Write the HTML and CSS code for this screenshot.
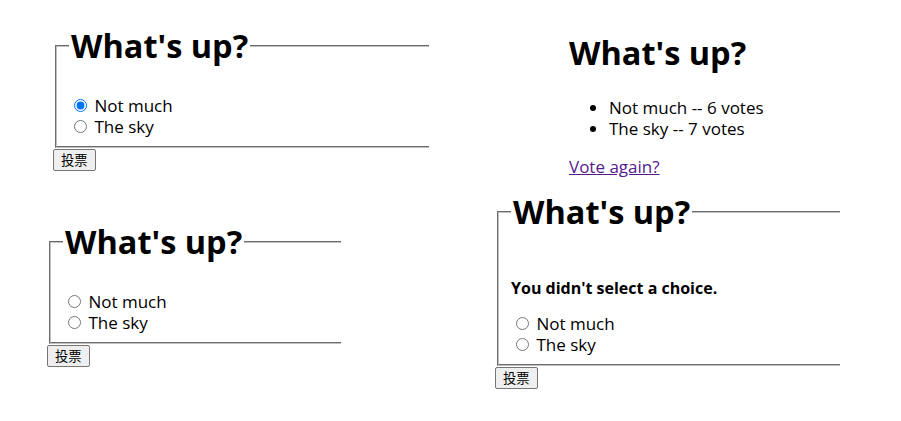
FILE: index.html
```html
<!DOCTYPE html>
<html lang="zh">
<head>
<meta charset="utf-8">
<title>Polls</title>
<link rel="stylesheet" href="styles.css">
</head>
<body>
<div class="collage">
  <div class="col col-left">
    <div class="shot shot-a">
      <form class="poll">
        <fieldset class="poll-set">
          <legend class="poll-legend"><h1 class="q">What's up?</h1></legend>
          <input type="radio" name="ca" id="ca1" class="choice" checked> <label for="ca1">Not much</label><br>
          <input type="radio" name="ca" id="ca2" class="choice"> <label for="ca2">The sky</label><br>
        </fieldset>
        <input type="submit" value="投票" class="vote">
      </form>
    </div>
    <div class="shot shot-c">
      <form class="poll">
        <fieldset class="poll-set">
          <legend class="poll-legend"><h1 class="q">What's up?</h1></legend>
          <input type="radio" name="cc" id="cc1" class="choice"> <label for="cc1">Not much</label><br>
          <input type="radio" name="cc" id="cc2" class="choice"> <label for="cc2">The sky</label><br>
        </fieldset>
        <input type="submit" value="投票" class="vote">
      </form>
    </div>
  </div>
  <div class="col col-right">
    <div class="shot shot-b">
      <h1 class="q">What's up?</h1>
      <ul class="results">
        <li>Not much -- 6 votes</li>
        <li>The sky -- 7 votes</li>
      </ul>
      <p class="again"><a href="#" class="again-link">Vote again?</a></p>
    </div>
    <div class="shot shot-d">
      <form class="poll">
        <fieldset class="poll-set">
          <legend class="poll-legend"><h1 class="q">What's up?</h1></legend>
          <p class="error"><strong>You didn't select a choice.</strong></p>
          <input type="radio" name="cd" id="cd1" class="choice"> <label for="cd1">Not much</label><br>
          <input type="radio" name="cd" id="cd2" class="choice"> <label for="cd2">The sky</label><br>
        </fieldset>
        <input type="submit" value="投票" class="vote">
      </form>
    </div>
  </div>
</div>
</body>
</html>
```
FILE: styles.css
```css
html, body {
  margin: 0;
  padding: 0;
  background: #fff;
}
body {
  font-family: "Open Sans", "Noto Sans CJK SC", sans-serif;
  font-size: 17px;
  line-height: 21px;
  color: #000;
  width: 901px;
  height: 421px;
  overflow: hidden;
}
.collage {
  display: flex;
  align-items: flex-start;
}
.col {
  display: flex;
  flex-direction: column;
}
.col-left {
  width: 480px;
}
.col-right {
  width: 421px;
}
.shot {
  overflow: hidden;
}
.shot-a {
  margin: 4px 0 0 53px;
  width: 376px;
}
.shot-c {
  margin: 29px 0 0 47px;
  width: 294px;
}
.shot-b {
  margin: 0 0 0 89px;
  padding-top: 11px;
  height: 168px;
  width: 300px;
}
.shot-b .q {
  margin-bottom: 23px;
}
.shot-d {
  margin: 0 0 0 15px;
  width: 345px;
}
.shot-d .poll {
  margin-top: -9px;
}
.poll {
  width: 700px;
  margin: 0;
}
.poll-set {
  margin: 0 2px;
  padding: 7px 12px 9px;
  border: 2px groove #c0c0c0;
  min-width: 0;
}
.poll-legend {
  padding: 0 2px;
}
.q {
  font-size: 32.5px;
  line-height: 42px;
  font-weight: 700;
  margin: 21px 0;
}
.choice {
  width: 13px;
  height: 13px;
  margin: 3px 3px 0 5px;
  vertical-align: baseline;
}
.vote {
  font-family: "Noto Sans CJK SC", sans-serif;
  font-size: 13.33px;
  line-height: 18px;
  padding: 1px 7px;
  border: 1px solid #767676;
  border-radius: 2px;
  background: #efefef;
  color: #000;
  margin: 1px 0 0;
}
.results {
  margin: 16px 0;
  padding-left: 40px;
}
.again {
  margin: 17px 0;
}
.again-link {
  color: #551a8b;
}
.error {
  margin: 17px 0 14px;
  font-size: 16px;
}
```
